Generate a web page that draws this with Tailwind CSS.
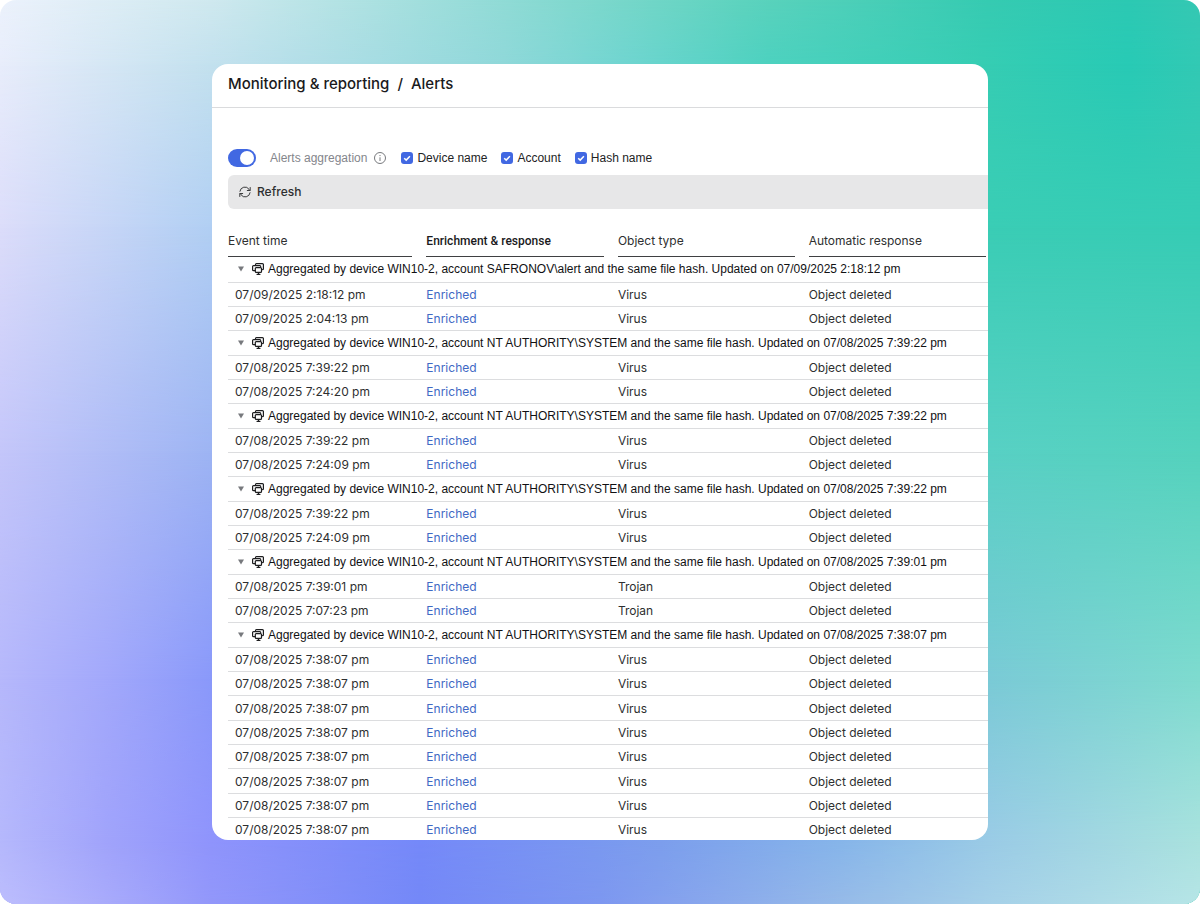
<!DOCTYPE html>
<html lang="en">
<head>
<meta charset="utf-8">
<meta name="viewport" content="width=device-width, initial-scale=1">
<title>Monitoring &amp; reporting / Alerts</title>
<script src="https://cdn.jsdelivr.net/npm/@tailwindcss/browser@4"></script>
</head>
<body class="bg-white font-['Inter',sans-serif] text-[#2e2f30]">
<svg class="hidden" aria-hidden="true">
  <symbol id="devices" viewBox="0 0 12 12">
    <g fill="none" stroke="#1d1d1f" stroke-width="1.200" stroke-linejoin="round" stroke-linecap="round">
      <path d="M3.500 2.400V1.500a.9.9 0 0 1 .9-.9h6.100a.9.9 0 0 1 .9.9v4.200a.9.9 0 0 1-.9.9"/>
      <path d="M3.200 7.600H1.500a.9.9 0 0 1-.9-.9V3.500a.9.9 0 0 1 .9-.9H7.800a.9.9 0 0 1 .9.9"/>
      <rect x="3.300" y="4.700" width="6.200" height="4.700" rx=".9"/>
      <path d="M5 11.300h3M6.500 9.600v1.500"/>
    </g>
  </symbol>
  <symbol id="tick" viewBox="0 0 12 12">
    <path d="M3.200 6.200 5.200 8.100 8.900 4.200" fill="none" stroke="#fff" stroke-width="1.500"/>
  </symbol>
</svg>

<div class="relative isolate h-screen overflow-hidden rounded-2xl p-16">
  <!-- Colour mesh: one horizontal gradient per row, each faded in over the one above -->
  <div class="absolute inset-0 -z-10 bg-[linear-gradient(to_right,#ecf2fc,#cfe9ef_17.6%,#95dcd8_40%,#5dd3be_62%,#36cbb2_82.3%,#2cc9b3_94%,#35c8b3)]"></div>
  <div class="absolute inset-0 -z-10 bg-[linear-gradient(to_right,#e8edfb,#c3e1ee_17.6%,#8fd8d9_42%,#70d5d0_52%,#4dd1bf_64%,#36cdb3_82%,#28cab5_94%,#32c9b4)] [mask-image:linear-gradient(transparent,#000_7%)]"></div>
  <div class="absolute inset-0 -z-10 bg-[linear-gradient(to_right,#dcddfa,#b1cff3_17.6%,#3acdb5_82.3%,#36ccb5)] [mask-image:linear-gradient(transparent_7%,#000_25%)]"></div>
  <div class="absolute inset-0 -z-10 bg-[linear-gradient(to_right,#c4c6fa,#9db4f3_17.6%,#58d0c4_82.3%,#54d2bd)] [mask-image:linear-gradient(transparent_25%,#000_50%)]"></div>
  <div class="absolute inset-0 -z-10 bg-[linear-gradient(to_right,#b6b8fb,#a2a8fb_9%,#8a99fa_17.6%,#7acad6_82.3%,#7edbcf)] [mask-image:linear-gradient(transparent_50%,#000_75%)]"></div>
  <div class="absolute inset-0 -z-10 bg-[linear-gradient(to_right,#b5b8fc,#a0a3fb_9%,#8f94fc_17.6%,#7589f9_35%,#7c9eed_55%,#86b5ea_70%,#9acbe6_82.3%,#a9e2de)] [mask-image:linear-gradient(transparent_75%,#000_93%)]"></div>
  <div class="absolute inset-0 -z-10 bg-[linear-gradient(to_right,#bcbdfd,#a8aafb_9%,#9297fa_17.6%,#7488f7_35%,#7d97f0_50%,#96bae8_70%,#a5d0e8_82.3%,#b6e5e6)] [mask-image:linear-gradient(transparent_93%,#000)]"></div>

  <main class="mx-auto h-full w-full max-w-[776px] overflow-hidden rounded-2xl bg-white">
    <header class="border-b border-[#dadbdd] px-4 pt-2 pb-[11px]">
      <h1 class="flex gap-2 text-[15px] leading-6 font-medium text-[#1a1a1c]">
        <a href="#">Monitoring &amp; reporting</a><span>/</span><span>Alerts</span>
      </h1>
    </header>

    <div class="pl-4">
      <div class="mt-[39px] flex h-[22px] items-center font-['Liberation_Sans',sans-serif] text-xs text-[#222324]">
        <input id="agg" type="checkbox" role="switch" checked class="h-[18px] w-7 appearance-none rounded-full bg-[#4168e2] p-0.5 before:ml-auto before:block before:size-[14px] before:rounded-full before:bg-white">
        <label for="agg" class="ml-3.5 text-[#84868c]">Alerts aggregation</label>
        <svg class="ml-[7px] size-3" viewBox="0 0 12 12" fill="none" stroke="#77797d" role="img" aria-label="Info"><circle cx="6" cy="6" r="5.500"/><path d="M6 5.300V9M6 3v1.100"/></svg>
        <div class="ml-[15px] flex gap-3.5">
          <label class="flex items-center gap-1"><span class="grid"><input type="checkbox" checked class="size-3 appearance-none rounded-[3px] bg-[#4168e2] [grid-area:1/1]"><svg class="pointer-events-none size-3 [grid-area:1/1]"><use href="#tick"/></svg></span>Device name</label>
          <label class="flex items-center gap-1"><span class="grid"><input type="checkbox" checked class="size-3 appearance-none rounded-[3px] bg-[#4168e2] [grid-area:1/1]"><svg class="pointer-events-none size-3 [grid-area:1/1]"><use href="#tick"/></svg></span>Account</label>
          <label class="flex items-center gap-1"><span class="grid"><input type="checkbox" checked class="size-3 appearance-none rounded-[3px] bg-[#4168e2] [grid-area:1/1]"><svg class="pointer-events-none size-3 [grid-area:1/1]"><use href="#tick"/></svg></span>Hash name</label>
        </div>
      </div>

      <div class="mt-1.5 flex h-[34px] items-center rounded-l-md bg-[#e7e7e8] px-[11px]">
        <button type="button" class="flex items-center gap-1.5 text-xs font-medium">
          <svg class="size-3" viewBox="0 0 12 12" fill="none" stroke="#3a3b3d" stroke-linecap="round" stroke-linejoin="round"><path d="M.9 5.300A5 5 0 0 1 10 3.300l.9 1.100M11.200 1.500v3H8.300M11.100 6.700A5 5 0 0 1 2 8.700L1.100 7.600M.8 10.500v-3h2.900"/></svg>
          Refresh
        </button>
      </div>

      <table class="mt-[15px] w-full table-fixed border-collapse text-left text-xs">
        <colgroup><col class="w-[26.1%]"><col class="w-[25.200%]"><col class="w-[25.100%]"><col></colgroup>
        <thead>
          <tr>
            <th scope="col" class="p-0 font-normal"><div class="mr-3.5 h-[33px] border-b border-[#3f4042] pt-px leading-8">Event time</div></th>
            <th scope="col" class="p-0 font-['Roboto',sans-serif] font-medium text-[#1a1a1c]"><div class="mr-3.5 h-[33px] border-b border-[#3f4042] pt-px leading-8">Enrichment &amp; response</div></th>
            <th scope="col" class="p-0 font-normal"><div class="mr-3.5 h-[33px] border-b border-[#3f4042] pt-px leading-8">Object type</div></th>
            <th scope="col" class="p-0 font-normal"><div class="mr-0.5 h-[33px] border-b border-[#3f4042] pt-px leading-8">Automatic response</div></th>
          </tr>
        </thead>
        <tbody id="rows" class="leading-5 [&>tr]:h-6 [&>tr]:border-b [&>tr]:border-[#dcdddf] [&>tr:nth-child(3n+1)]:h-[25px]"></tbody>
      </table>
    </div>
  </main>
</div>

<script>
  const system = 'NT AUTHORITY\\SYSTEM';
  const groups = [
    { account: 'SAFRONOV\\alert', updated: '07/09/2025 2:18:12 pm', type: 'Virus', times: ['07/09/2025 2:18:12 pm', '07/09/2025 2:04:13 pm'] },
    { account: system, updated: '07/08/2025 7:39:22 pm', type: 'Virus', times: ['07/08/2025 7:39:22 pm', '07/08/2025 7:24:20 pm'] },
    { account: system, updated: '07/08/2025 7:39:22 pm', type: 'Virus', times: ['07/08/2025 7:39:22 pm', '07/08/2025 7:24:09 pm'] },
    { account: system, updated: '07/08/2025 7:39:22 pm', type: 'Virus', times: ['07/08/2025 7:39:22 pm', '07/08/2025 7:24:09 pm'] },
    { account: system, updated: '07/08/2025 7:39:01 pm', type: 'Trojan', times: ['07/08/2025 7:39:01 pm', '07/08/2025 7:07:23 pm'] },
    { account: system, updated: '07/08/2025 7:38:07 pm', type: 'Virus', times: Array(8).fill('07/08/2025 7:38:07 pm') }
  ];
  document.getElementById('rows').innerHTML = groups.map(g => `
    <tr><td colspan="4" class="p-0 font-['Liberation_Sans',sans-serif] text-[#111113]"><div class="flex items-center whitespace-nowrap pl-[9px]">
      <button type="button" aria-expanded="true" aria-label="Collapse group" class="grid size-2 shrink-0 place-items-center"><svg class="h-1.5 w-2" viewBox="0 0 8 6"><path d="M1 .5h6L4 5.500z" fill="#77797d"/></svg></button>
      <svg class="ml-[7px] mr-1 size-3 shrink-0"><use href="#devices"/></svg>
      Aggregated by device WIN10-2, account ${g.account} and the same file hash. Updated on ${g.updated}
    </div></td></tr>` + g.times.map(t => `
    <tr><td class="p-0 pt-0.5 pl-[7px]">${t}</td><td class="p-0 pt-0.5"><a href="#" class="text-[#3f69c4]">Enriched</a></td><td class="p-0 pt-0.5">${g.type}</td><td class="p-0 pt-0.5">Object deleted</td></tr>`).join('')).join('');
</script>
</body>
</html>
